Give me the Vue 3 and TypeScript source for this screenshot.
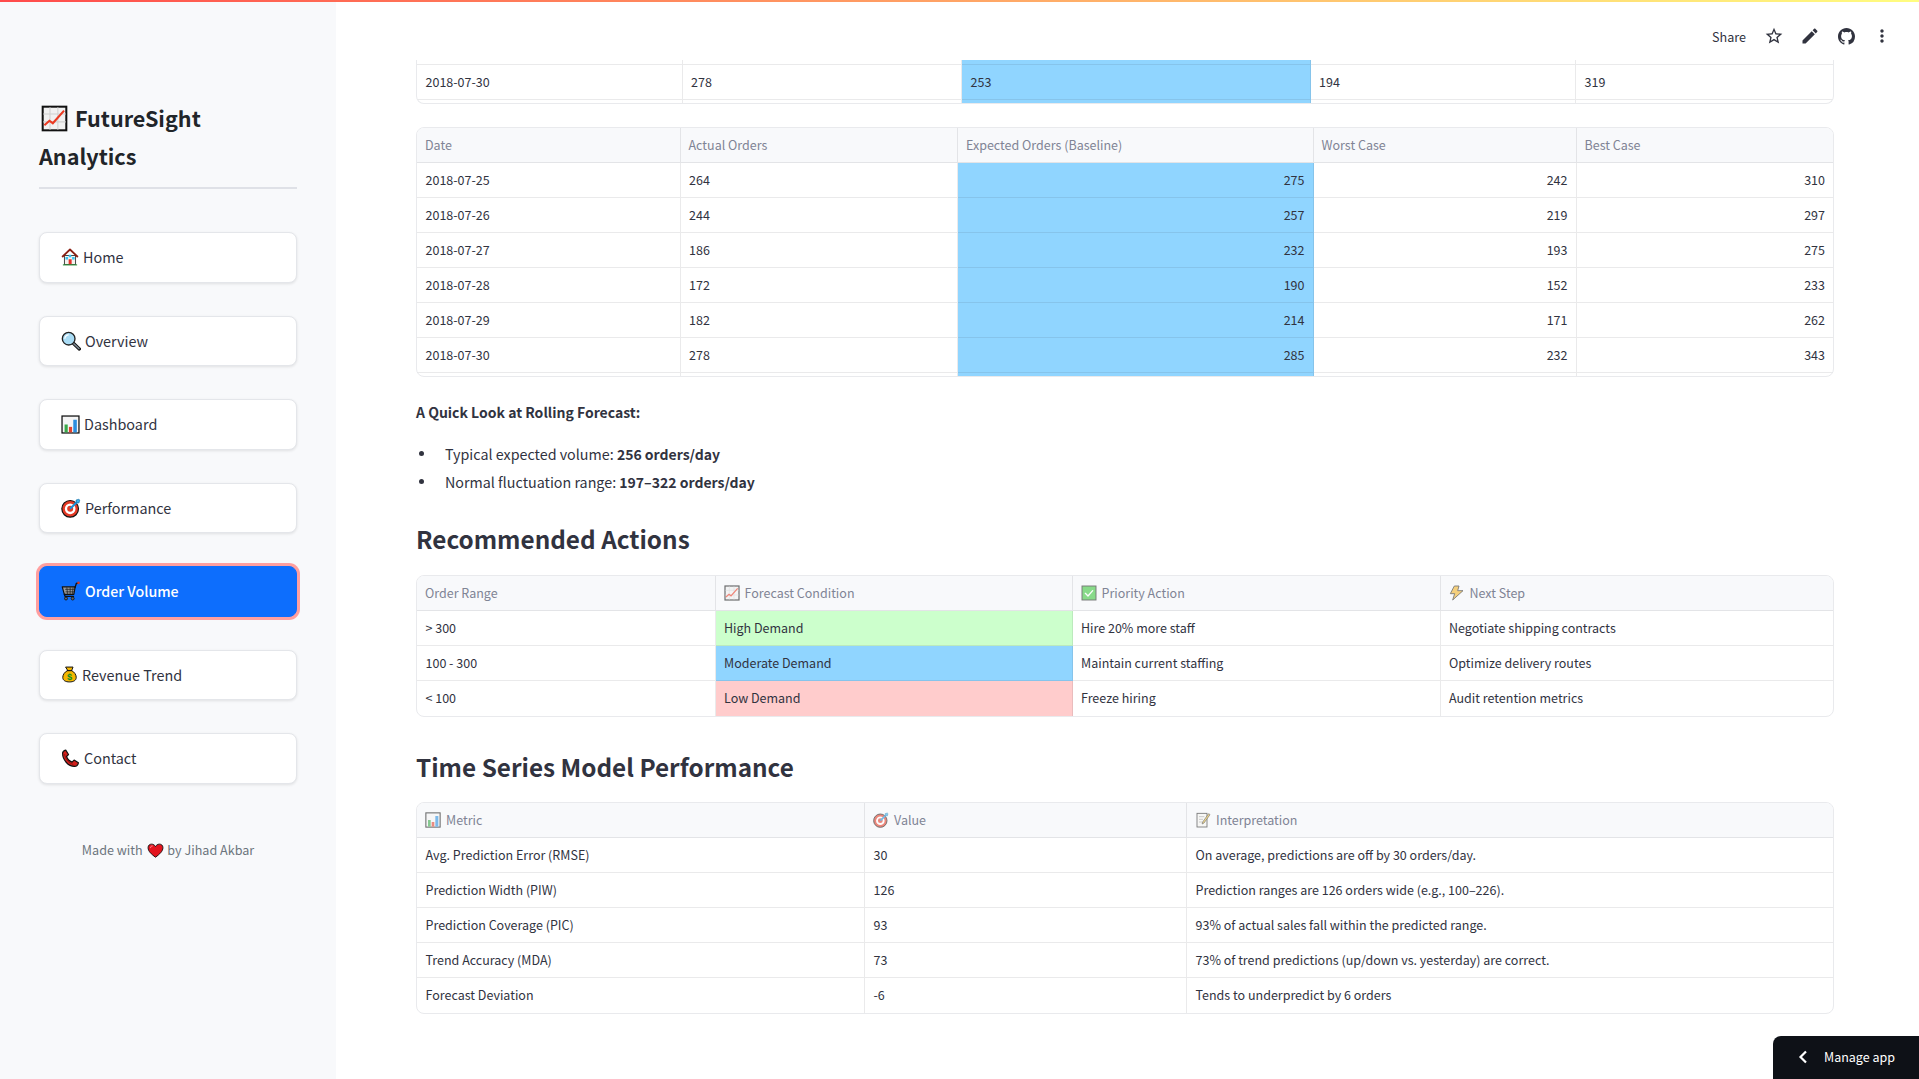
<script setup lang="ts">
import { h } from 'vue'
import type { FunctionalComponent } from 'vue'

type Shape = [string, Record<string, string | number>, string?]

const K = { stroke: '#111', 'stroke-width': 1.4, 'stroke-linejoin': 'round', 'stroke-linecap': 'round' }

const shapes: Record<string, Shape[]> = {
  chart: [
    ['rect', { x: 1.5, y: 1.5, width: 21, height: 21, fill: '#f1f1f1', stroke: '#111', 'stroke-width': 1.8 }],
    ['path', { d: 'M8 2v20M15 2v20M2 8h20M2 15h20', stroke: '#cfcfcf', 'stroke-width': 0.9, fill: 'none' }],
    ['path', { d: 'M3 18l4.5-4 3 2.2L20.5 5', stroke: '#ea3a22', 'stroke-width': 1.9, fill: 'none' }],
  ],
  home: [
    ['rect', { x: 4.5, y: 10, width: 15, height: 12, fill: '#f4f2ee', stroke: '#222', 'stroke-width': 1.1 }],
    ['path', { d: 'M1.5 12L12 2l10.5 10', fill: 'none', stroke: '#8a1e12', 'stroke-width': 2.4, 'stroke-linejoin': 'round' }],
    ['rect', { x: 10.2, y: 15, width: 4, height: 7, fill: '#e5322b' }],
    ['rect', { x: 6, y: 12, width: 3.4, height: 3.4, fill: '#39c4f2' }],
    ['rect', { x: 14.8, y: 12, width: 3.4, height: 3.4, fill: '#39c4f2' }],
    ['rect', { x: 10.3, y: 9, width: 3.4, height: 3.4, fill: '#39c4f2' }],
    ['path', { d: 'M2.5 22.5h19', stroke: '#2f8f3c', 'stroke-width': 1.5 }],
  ],
  search: [
    ['path', { d: 'M14.5 14.5l7.5 7', stroke: '#111', 'stroke-width': 4, 'stroke-linecap': 'round' }],
    ['path', { d: 'M15 15l6.5 6', stroke: '#7d8a94', 'stroke-width': 2, 'stroke-linecap': 'round' }],
    ['circle', { cx: 9.2, cy: 9.2, r: 7.6, fill: '#a9dcf5', stroke: '#222', 'stroke-width': 1.6 }],
    ['path', { d: 'M4.6 9.2a4.6 4.6 0 0 1 4.6-4.6', stroke: '#fff', 'stroke-width': 1.5, fill: 'none' }],
  ],
  bars: [
    ['rect', { x: 1.3, y: 1.3, width: 21.4, height: 21.4, fill: '#f5f5f5', stroke: '#111', 'stroke-width': 1.6 }],
    ['rect', { x: 4.5, y: 12, width: 4, height: 10, fill: '#3aa84a' }],
    ['rect', { x: 10, y: 15, width: 4, height: 7, fill: '#e2432f' }],
    ['rect', { x: 15.5, y: 6, width: 4.5, height: 16, fill: '#2b8fe0' }],
  ],
  dart: [
    ['circle', { cx: 11, cy: 13, r: 10, fill: '#e43a25', stroke: '#111', 'stroke-width': 1.4 }],
    ['circle', { cx: 11, cy: 13, r: 6.4, fill: '#fff' }],
    ['circle', { cx: 11, cy: 13, r: 3.6, fill: '#e43a25' }],
    ['path', { d: 'M11 13L21 3', stroke: '#1d8fd6', 'stroke-width': 2.6 }],
    ['path', { d: 'M18 2.5l3.5-1 1 1-1 3.5-3-.5z', fill: '#35b4ee', stroke: '#1a6ea5', 'stroke-width': 0.8 }],
  ],
  cart: [
    ['path', { d: 'M1.5 7h15.5l-1.6 9H4z', fill: '#9a9a9a', ...K }],
    ['path', { d: 'M5 10h11M5.5 13h10M7 7.5l.8 8M11 7.5v8M14.5 7.5l-.8 8', stroke: '#222', 'stroke-width': 0.9, fill: 'none' }],
    ['path', { d: 'M16.8 8l1.6-5 2.4-.8', fill: 'none', ...K, 'stroke-width': 1.6 }],
    ['path', { d: 'M4 16l1 2.5h10', fill: 'none', ...K, 'stroke-width': 1.6 }],
    ['circle', { cx: 21, cy: 2.2, r: 1.6, fill: '#d33a28' }],
    ['circle', { cx: 6, cy: 21, r: 1.8, fill: '#666', stroke: '#111', 'stroke-width': 1 }],
    ['circle', { cx: 14, cy: 21, r: 1.8, fill: '#666', stroke: '#111', 'stroke-width': 1 }],
  ],
  money: [
    ['path', { d: 'M7 1.5h10l-2 5c4 2 6.5 6 6.5 9.5 0 4.5-4 6.5-9.5 6.5S2.500 20.500 2.500 16c0-3.500 2.500-7.500 6.500-9.500z', fill: '#f5b700', ...K }],
    ['path', { d: 'M8.500 6.500h7', stroke: '#111', 'stroke-width': 1.6 }],
    ['text', { x: 12, y: 19.500, 'text-anchor': 'middle', 'font-size': 13, 'font-weight': 700, fill: '#0d8f2a', 'font-family': 'Liberation Sans, sans-serif' }, '$'],
  ],
  phone: [
    ['path', { d: 'M2 5.500C2 3.500 4 2 6 1.500l3.500 5.500-2.500 2.500c1 3 4 6 7 7l2.500-2.500 5.500 3.500c-.5 2.500-2.500 4.500-5 4.500C9 22 2 13.500 2 5.500z', fill: '#d3201c', stroke: '#111', 'stroke-width': 1.5, 'stroke-linejoin': 'round' }],
    ['path', { d: 'M4.500 6.500c.5 5 5 11 11 13', stroke: '#8a0f0d', 'stroke-width': 1.200, fill: 'none' }],
  ],
  heart: [
    ['path', { d: 'M12 21.500C6 17 1.500 13 1.500 8 1.500 4.500 4 3 6.500 3c2.500 0 4.500 1.500 5.500 3.500C13 4.500 15 3 17.500 3c2.500 0 5 1.500 5 5 0 5-4.500 9-10.500 13.500z', fill: '#e3141e', stroke: '#111', 'stroke-width': 1.3, 'stroke-linejoin': 'round' }],
    ['path', { d: 'M5 8c0-1.500 1-2.500 2.500-2.500', stroke: '#ff8a8f', 'stroke-width': 1.400, fill: 'none', 'stroke-linecap': 'round' }],
  ],
  check: [
    ['rect', { x: 1.500, y: 1.500, width: 21, height: 21, fill: '#3ec63e', stroke: '#222', 'stroke-width': 1.4 }],
    ['path', { d: 'M6.500 12.500l4 4 7-8', stroke: '#fff', 'stroke-width': 2, fill: 'none', 'stroke-linecap': 'round', 'stroke-linejoin': 'round' }],
  ],
  bolt: [
    ['path', { d: 'M15 1.500H8L2 13h6.500L5.500 22.500 21 8.500h-8z', fill: '#f4b52a', stroke: '#222', 'stroke-width': 1.3, 'stroke-linejoin': 'round' }],
  ],
  memo: [
    ['rect', { x: 3, y: 2, width: 15, height: 20.500, fill: '#f7f7f2', stroke: '#222', 'stroke-width': 1.300 }],
    ['path', { d: 'M6 7h8M6 11h6M6 15h5', stroke: '#888', 'stroke-width': 1 }],
    ['path', { d: 'M20.500 2.500L11.500 15l-.8 3 2.800-1.500 9-12.500z', fill: '#f0c23c', stroke: '#222', 'stroke-width': 1 }],
  ],
}

const Emoji: FunctionalComponent<{ name: string }> = (p) =>
  h(
    'svg',
    { viewBox: '0 0 24 24', class: 'emoji' },
    shapes[p.name].map(([t, a, c]) => h(t, a, c)),
  )
Emoji.props = ['name']

interface NavItem { label: string; icon: string; size: number; active?: boolean }
const nav: NavItem[] = [
  { label: 'Home', icon: 'home', size: 18 },
  { label: 'Overview', icon: 'search', size: 20 },
  { label: 'Dashboard', icon: 'bars', size: 19 },
  { label: 'Performance', icon: 'dart', size: 20 },
  { label: 'Order Volume', icon: 'cart', size: 20, active: true },
  { label: 'Revenue Trend', icon: 'money', size: 17 },
  { label: 'Contact', icon: 'phone', size: 19 },
]

interface Head { text: string; icon?: string }
interface Table {
  cols: number[]
  head?: Head[]
  rows: string[][]
  right?: number[]
  tint?: (r: number, c: number) => string
  cls?: string
}

const blueCol = (_r: number, c: number) => (c === 2 ? 'blue' : '')
const demand = ['green', 'blue', 'pink']
const sliver = ['', '', '', '', '']

const cutTable: Table = {
  cols: [265.5, 279.5, 348.5, 265.5, 258],
  rows: [sliver, ['2018-07-30', '278', '253', '194', '319'], sliver],
  tint: blueCol,
  cls: 'cut',
}

const forecastTable: Table = {
  cols: [263.5, 277.5, 355.5, 263, 257.5],
  head: [
    { text: 'Date' },
    { text: 'Actual Orders' },
    { text: 'Expected Orders (Baseline)' },
    { text: 'Worst Case' },
    { text: 'Best Case' },
  ],
  rows: [
    ['2018-07-25', '264', '275', '242', '310'],
    ['2018-07-26', '244', '257', '219', '297'],
    ['2018-07-27', '186', '232', '193', '275'],
    ['2018-07-28', '172', '190', '152', '233'],
    ['2018-07-29', '182', '214', '171', '262'],
    ['2018-07-30', '278', '285', '232', '343'],
    sliver,
  ],
  right: [2, 3, 4],
  tint: blueCol,
  cls: 'tail',
}

const actionTable: Table = {
  cols: [298.5, 357, 368, 393.5],
  head: [
    { text: 'Order Range' },
    { text: 'Forecast Condition', icon: 'chart' },
    { text: 'Priority Action', icon: 'check' },
    { text: 'Next Step', icon: 'bolt' },
  ],
  rows: [
    ['> 300', 'High Demand', 'Hire 20% more staff', 'Negotiate shipping contracts'],
    ['100 - 300', 'Moderate Demand', 'Maintain current staffing', 'Optimize delivery routes'],
    ['< 100', 'Low Demand', 'Freeze hiring', 'Audit retention metrics'],
  ],
  tint: (r, c) => (c === 1 ? demand[r] : ''),
}

const modelTable: Table = {
  cols: [448, 322, 647],
  head: [
    { text: 'Metric', icon: 'bars' },
    { text: 'Value', icon: 'dart' },
    { text: 'Interpretation', icon: 'memo' },
  ],
  rows: [
    ['Avg. Prediction Error (RMSE)', '30', 'On average, predictions are off by 30 orders/day.'],
    ['Prediction Width (PIW)', '126', 'Prediction ranges are 126 orders wide (e.g., 100–226).'],
    ['Prediction Coverage (PIC)', '93', '93% of actual sales fall within the predicted range.'],
    ['Trend Accuracy (MDA)', '73', '73% of trend predictions (up/down vs. yesterday) are correct.'],
    ['Forecast Deviation', '-6', 'Tends to underpredict by 6 orders'],
  ],
}

const cellClass = (t: Table, r: number, c: number) => [
  t.tint ? t.tint(r, c) : '',
  t.right && t.right.includes(c) ? 'num' : '',
]
</script>

<template>
  <div class="app">
    <div class="rainbow"></div>

    <aside class="sidebar">
      <h1 class="brand"><Emoji name="chart" class="brand-icon" /> FutureSight<br />Analytics</h1>
      <hr class="rule" />
      <nav class="nav">
        <button v-for="item in nav" :key="item.label" class="nav-btn" :class="{ active: item.active }">
          <Emoji :name="item.icon" :style="{ width: item.size + 'px', height: item.size + 'px' }" />
          <span>{{ item.label }}</span>
        </button>
      </nav>
      <p class="made">Made with <Emoji name="heart" class="heart" /> by Jihad Akbar</p>
    </aside>

    <main class="main">
      <div class="toolbar">
        <span class="share">Share</span>
        <span class="tool">
          <svg viewBox="0 0 24 24"><path d="M22 9.24l-7.19-.62L12 2 9.19 8.63 2 9.24l5.46 4.73L5.820 21 12 17.270 18.180 21l-1.630-7.030L22 9.240zM12 15.400l-3.760 2.270 1-4.280-3.320-2.880 4.380-.38L12 6.100l1.710 4.040 4.380.38-3.320 2.880 1 4.280L12 15.400z" /></svg>
        </span>
        <span class="tool">
          <svg viewBox="0 0 24 24"><path d="M3 17.250V21h3.750L17.810 9.940l-3.750-3.750L3 17.250zM20.710 7.040c.39-.39.39-1.020 0-1.410l-2.340-2.340c-.39-.39-1.020-.39-1.410 0l-1.830 1.830 3.750 3.750 1.830-1.830z" /></svg>
        </span>
        <span class="tool">
          <svg viewBox="0 0 16 16" class="gh"><path d="M8 0C3.580 0 0 3.580 0 8c0 3.540 2.290 6.530 5.470 7.590.4.070.55-.17.55-.38 0-.19-.01-.82-.01-1.490-2.010.37-2.530-.49-2.690-.94-.09-.23-.48-.94-.82-1.130-.28-.15-.68-.52-.01-.53.63-.01 1.080.58 1.230.82.720 1.210 1.870.870 2.330.660.070-.52.280-.870.510-1.070-1.780-.2-3.640-.89-3.640-3.950 0-.87.310-1.590.820-2.150-.08-.2-.36-1.020.08-2.120 0 0 .67-.21 2.200.82.640-.18 1.320-.27 2-.27s1.360.09 2 .27c1.530-1.040 2.200-.82 2.200-.82.44 1.100.16 1.920.08 2.120.51.56.82 1.270.82 2.150 0 3.070-1.870 3.750-3.650 3.950.29.25.54.73.54 1.480 0 1.070-.01 1.930-.01 2.200 0 .21.15.46.55.38A8.013 8.013 0 0 0 16 8c0-4.420-3.580-8-8-8z" /></svg>
        </span>
        <span class="tool">
          <svg viewBox="0 0 24 24"><path d="M12 8c1.100 0 2-.9 2-2s-.9-2-2-2-2 .9-2 2 .9 2 2 2zm0 2c-1.100 0-2 .9-2 2s.9 2 2 2 2-.9 2-2-.9-2-2-2zm0 6c-1.100 0-2 .9-2 2s.9 2 2 2 2-.9 2-2-.9-2-2-2z" /></svg>
        </span>
      </div>

      <div class="content">
        <section v-for="(t, ti) in [cutTable, forecastTable]" :key="ti" class="frame" :class="t.cls">
          <table>
            <colgroup><col v-for="(w, i) in t.cols" :key="i" :style="{ width: w + 'px' }" /></colgroup>
            <thead v-if="t.head">
              <tr><th v-for="(c, i) in t.head" :key="i">{{ c.text }}</th></tr>
            </thead>
            <tbody>
              <tr v-for="(row, r) in t.rows" :key="r" :class="{ sliver: row === sliver }">
                <td v-for="(v, c) in row" :key="c" :class="cellClass(t, r, c)">{{ v }}</td>
              </tr>
            </tbody>
          </table>
        </section>

        <p class="look"><strong>A Quick Look at Rolling Forecast:</strong></p>
        <ul class="points">
          <li><span>Typical expected volume: <strong>256 orders/day</strong></span></li>
          <li><span>Normal fluctuation range: <strong>197–322 orders/day</strong></span></li>
        </ul>

        <h2 class="title first">Recommended Actions</h2>
        <section class="frame">
          <table>
            <colgroup><col v-for="(w, i) in actionTable.cols" :key="i" :style="{ width: w + 'px' }" /></colgroup>
            <thead>
              <tr>
                <th v-for="(c, i) in actionTable.head" :key="i">
                  <Emoji v-if="c.icon" :name="c.icon" class="head-icon" />{{ c.text }}
                </th>
              </tr>
            </thead>
            <tbody>
              <tr v-for="(row, r) in actionTable.rows" :key="r">
                <td v-for="(v, c) in row" :key="c" :class="cellClass(actionTable, r, c)">{{ v }}</td>
              </tr>
            </tbody>
          </table>
        </section>

        <h2 class="title second">Time Series Model Performance</h2>
        <section class="frame">
          <table>
            <colgroup><col v-for="(w, i) in modelTable.cols" :key="i" :style="{ width: w + 'px' }" /></colgroup>
            <thead>
              <tr>
                <th v-for="(c, i) in modelTable.head" :key="i">
                  <Emoji v-if="c.icon" :name="c.icon" class="head-icon" />{{ c.text }}
                </th>
              </tr>
            </thead>
            <tbody>
              <tr v-for="(row, r) in modelTable.rows" :key="r">
                <td v-for="(v, c) in row" :key="c">{{ v }}</td>
              </tr>
            </tbody>
          </table>
        </section>
      </div>

      <div class="manage">
        <svg viewBox="0 0 12 16" class="chev"><path d="M9 2.500L3.500 8 9 13.500" /></svg>
        <span>Manage app</span>
      </div>
    </main>
  </div>
</template>

<style>
html,
body {
  margin: 0;
  overflow: hidden;
  background: #fff;
}
</style>

<style scoped>
.app {
  position: relative;
  display: flex;
  width: 1919px;
  height: 1079px;
  overflow: hidden;
  font-family: "Noto Sans CJK SC", "Open Sans", sans-serif;
  color: #31333f;
}
.rainbow {
  position: absolute;
  top: 0;
  left: 0;
  right: 0;
  height: 2px;
  z-index: 3;
  background: linear-gradient(to right, #ff4b4b, #fffd80);
}
.sidebar {
  width: 336px;
  flex: none;
  box-sizing: border-box;
  padding: 99px 39px 0;
  background: #f8f9fb;
}
.brand {
  margin: 0;
  font-size: 21.6px;
  line-height: 38px;
  font-weight: 700;
  color: #212529;
}
.brand-icon {
  width: 27px;
  height: 27px;
  vertical-align: -5px;
  margin-left: 2px;
  margin-right: 2px;
}
.rule {
  margin: 12px 0 0;
  border: 0;
  height: 2px;
  background: #dfe1e7;
}
.nav {
  display: flex;
  flex-direction: column;
  gap: 33px;
  margin-top: 43px;
}
.nav-btn {
  display: flex;
  align-items: center;
  gap: 4px;
  height: 50.5px;
  box-sizing: border-box;
  padding: 0 21px;
  background: #fff;
  border: 1px solid #e4e6ea;
  border-radius: 8px;
  box-shadow: 0 1px 3px rgba(0, 0, 0, 0.1);
  font: inherit;
  font-size: 14.4px;
  line-height: 24px;
  color: #31333f;
  text-align: left;
}
.nav-btn.active {
  background: #0d6efd;
  border-color: #0d6efd;
  color: #fff;
  font-weight: 500;
  font-size: 14.2px;
  box-shadow: 0 0 0 3px #ff9f9f;
}
.emoji {
  display: inline-block;
  flex: none;
}
.made {
  margin: 55px 0 0;
  font-size: 12.6px;
  line-height: 21px;
  color: #6c757d;
  text-align: center;
}
.heart {
  width: 17px;
  height: 17px;
  vertical-align: -4px;
  margin: 0 1px;
}
.main {
  position: relative;
  flex: 1;
  min-width: 0;
  display: flex;
  flex-direction: column;
}
.toolbar {
  position: absolute;
  top: 18px;
  right: 19px;
  display: flex;
  align-items: center;
  height: 36px;
  z-index: 2;
}
.share {
  margin-right: 10px;
  font-size: 12.6px;
  color: #31333f;
}
.tool {
  width: 36px;
  height: 36px;
  display: flex;
  align-items: center;
  justify-content: center;
}
.tool svg {
  width: 20px;
  height: 20px;
  fill: #31333f;
}
.tool .gh {
  width: 17px;
  height: 17px;
}
.content {
  padding: 60px 85px 0 80px;
}
.frame {
  box-sizing: border-box;
  border: 1px solid #e9eaed;
  border-radius: 8px;
  overflow: hidden;
}
.frame.cut {
  border-top: 0;
  border-radius: 0 0 8px 8px;
  margin-bottom: 22.5px;
}
table {
  width: 100%;
  table-layout: fixed;
  border-collapse: separate;
  border-spacing: 0;
  font-size: 12.5px;
}
th,
td {
  box-sizing: border-box;
  height: 35px;
  padding: 0 8px;
  border-right: 1px solid rgba(49, 51, 63, 0.1);
  border-bottom: 1px solid rgba(49, 51, 63, 0.1);
  overflow: hidden;
  white-space: nowrap;
  text-align: left;
  font-weight: 400;
  line-height: 20px;
}
td {
  padding-left: 8.5px;
}
td:last-child {
  padding-right: 9px;
}
th:last-child,
td:last-child {
  border-right: 0;
}
th {
  background: #f8f9fb;
  color: #808495;
}
.frame:not(.tail):not(.cut) tbody tr:last-child td {
  border-bottom: 0;
}
.sliver td {
  height: 3px;
  line-height: 0;
  border-bottom: 0;
}
.cut tbody tr:first-child td {
  height: 5px;
  border-bottom: 1px solid rgba(49, 51, 63, 0.1);
}
.num {
  text-align: right;
}
.blue {
  background: #90d5ff;
}
.green {
  background: #ccffcc;
}
.pink {
  background: #ffcccc;
}
.head-icon {
  width: 16px;
  height: 16px;
  margin-right: 5px;
  vertical-align: -3px;
  opacity: 0.6;
}
.look {
  margin: 23.5px 0 0;
  font-size: 14px;
  line-height: 24px;
}
.look strong,
.points strong {
  font-weight: 700;
}
.points {
  list-style: none;
  margin: 15.5px 0 0;
  padding: 0;
  font-size: 14.3px;
  line-height: 28px;
}
.points li {
  display: flex;
  align-items: center;
}
.points li::before {
  content: "";
  flex: none;
  width: 5px;
  height: 5px;
  margin: 0 21px 0 3px;
  border-radius: 50%;
  background: #31333f;
}
.points strong {
  font-size: 14px;
}
.title {
  margin: 0 0 16px;
  font-size: 24.3px;
  line-height: 40px;
  font-weight: 700;
}
.title.first {
  margin-top: 23px;
}
.title.second {
  margin: 30px 0 15px;
}
.manage {
  position: absolute;
  right: 0;
  bottom: 0;
  width: 146px;
  height: 43px;
  box-sizing: border-box;
  display: flex;
  align-items: center;
  gap: 15px;
  padding: 0 0 2px 24px;
  background: #0e1117;
  border-top-left-radius: 8px;
  color: #fff;
  font-size: 12.5px;
}
.chev {
  width: 12px;
  height: 16px;
  fill: none;
  stroke: #fff;
  stroke-width: 2.2;
}
</style>
